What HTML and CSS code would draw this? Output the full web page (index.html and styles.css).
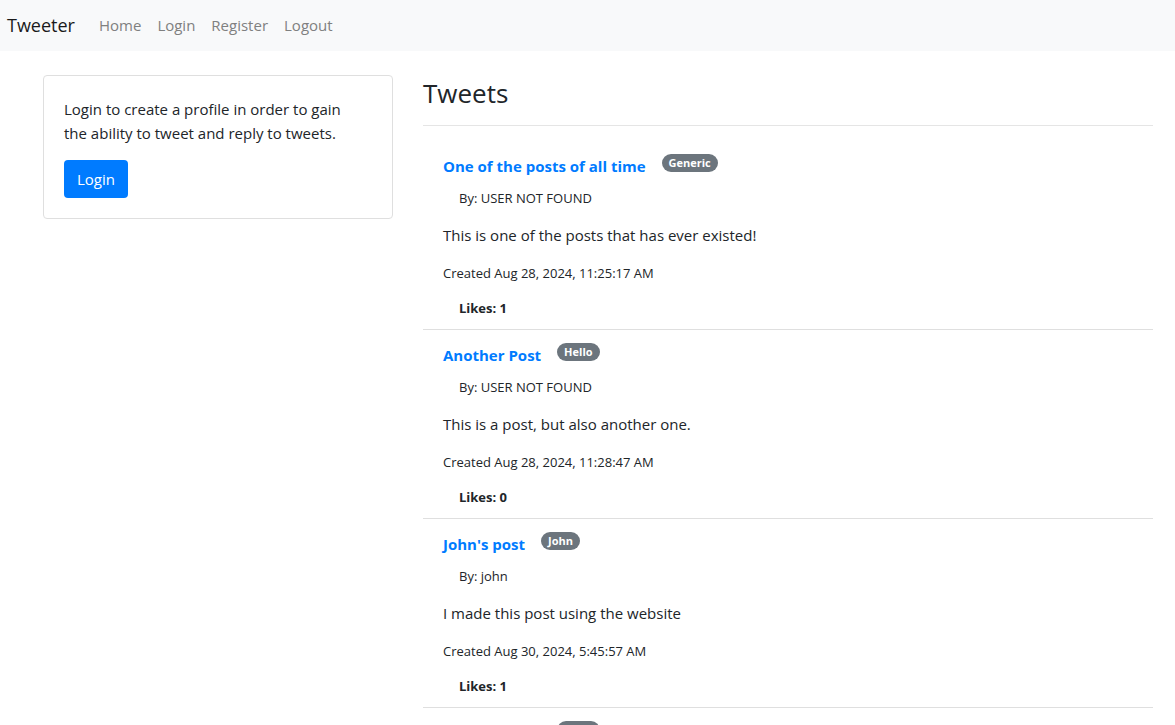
FILE: index.html
```html
<!DOCTYPE html>
<html lang="en">
<head>
<meta charset="utf-8">
<meta name="viewport" content="width=device-width, initial-scale=1">
<title>Tweeter</title>
<link rel="stylesheet" href="styles.css">
</head>
<body>
<nav class="navbar">
  <a class="brand" href="#">Tweeter</a>
  <a class="nav-link" href="#">Home</a>
  <a class="nav-link" href="#">Login</a>
  <a class="nav-link" href="#">Register</a>
  <a class="nav-link" href="#">Logout</a>
</nav>
<main class="layout">
  <aside class="card">
    <p class="card-text">Login to create a profile in order to gain the ability to tweet and reply to tweets.</p>
    <button class="btn" type="button">Login</button>
  </aside>
  <section class="feed">
    <h1 class="feed-title">Tweets</h1>
    <article class="post">
      <header class="post-head"><a class="post-title" href="#">One of the posts of all time</a><span class="badge">Generic</span></header>
      <p class="author">By: USER NOT FOUND</p>
      <p class="body">This is one of the posts that has ever existed!</p>
      <p class="created">Created Aug 28, 2024, 11:25:17 AM</p>
      <p class="likes">Likes: 1</p>
    </article>
    <article class="post">
      <header class="post-head"><a class="post-title" href="#">Another Post</a><span class="badge">Hello</span></header>
      <p class="author">By: USER NOT FOUND</p>
      <p class="body">This is a post, but also another one.</p>
      <p class="created">Created Aug 28, 2024, 11:28:47 AM</p>
      <p class="likes">Likes: 0</p>
    </article>
    <article class="post">
      <header class="post-head"><a class="post-title" href="#">John's post</a><span class="badge">John</span></header>
      <p class="author">By: john</p>
      <p class="body">I made this post using the website</p>
      <p class="created">Created Aug 30, 2024, 5:45:57 AM</p>
      <p class="likes">Likes: 1</p>
    </article>
    <article class="post">
      <header class="post-head"><a class="post-title" href="#">Another post</a><span class="badge">Hello</span></header>
      <p class="author">By: john</p>
    </article>
  </section>
</main>
</body>
</html>
```
FILE: styles.css
```css
* {
  box-sizing: border-box;
}

html {
  scrollbar-width: none;
}

body {
  margin: 0;
  background: #fff;
  color: #212529;
  font: 15px/24px "Open Sans", "Noto Sans", sans-serif;
}

a {
  text-decoration: none;
}

p {
  margin: 0;
}

.navbar {
  display: flex;
  align-items: center;
  gap: 16px;
  padding: 10px 7px 11px;
  background: #f8f9fa;
}

.brand {
  margin-right: 8px;
  color: #1a1a1a;
  font-size: 18px;
  line-height: 30px;
}

.nav-link {
  color: #7f8080;
}

.layout {
  display: grid;
  grid-template-columns: minmax(0, 35fr) minmax(0, 73fr);
  align-items: start;
  gap: 30px;
  padding: 24px 22px 0 43px;
}

.card {
  padding: 21px 32px 20px 20px;
  border: 1px solid #dfdfdf;
  border-radius: 4px;
}

.card-text {
  margin-bottom: 15px;
}

.btn {
  display: block;
  padding: 7px 13px;
  border: 0;
  border-radius: 4px;
  background: #007bff;
  color: #fff;
  font: inherit;
}

.feed-title {
  margin: 0 0 15px;
  padding: 1px 0 15px;
  border-bottom: 1px solid #e5e5e5;
  font-size: 26px;
  font-weight: 400;
  line-height: 34px;
}

.post {
  padding: 13px 20px 11px;
  border-bottom: 1px solid #dfdfdf;
}

.post-head {
  display: flex;
  align-items: flex-start;
  gap: 16px;
}

.post-title {
  color: #007bff;
  font-weight: 700;
}

.badge {
  padding: 0 7px;
  border-radius: 9px;
  background: #6c757d;
  color: #fff;
  font-size: 11px;
  font-weight: 700;
  line-height: 18px;
}

.author,
.created,
.likes {
  font-size: 13px;
  line-height: 20px;
}

.author {
  margin: 10px 16px 15px;
}

.created {
  margin: 16px 0 15px;
}

.likes {
  margin: 0 16px;
  font-weight: 700;
}
```
